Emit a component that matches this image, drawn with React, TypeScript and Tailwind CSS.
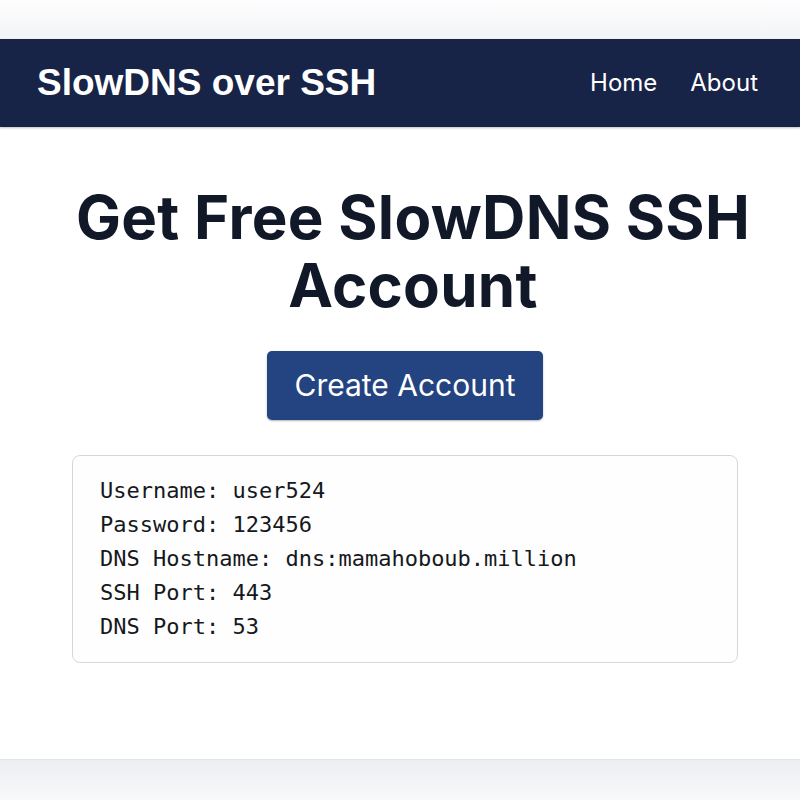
export default function App() {
  const lines = [
    'Username: user524',
    'Password: 123456',
    'DNS Hostname: dns:mamahoboub.million',
    'SSH Port: 443',
    'DNS Port: 53',
  ];

  return (
    <div className="w-[800px] h-[800px] flex flex-col bg-white overflow-hidden">
      <div className="h-[39px] bg-gradient-to-b from-[#fdfdfe] to-[#f3f4f6]" />
      <nav className="h-[88px] bg-[#172447] flex items-center justify-between pl-[37px] pr-[42px] shadow-[0_1px_2px_rgba(0,0,0,0.25)]">
        <span className="text-white font-bold text-[37px] tracking-[0px] font-['Liberation_Sans',Arial,sans-serif]">
          SlowDNS over SSH
        </span>
        <div className="flex gap-[33px] text-white text-[24px] font-['Inter',sans-serif]">
          <span>Home</span>
          <span>About</span>
        </div>
      </nav>
      <main className="flex-1 flex flex-col items-center pl-[72px] pr-[62px] pt-[56px]">
        <h1 className="pl-4 whitespace-nowrap text-center text-[#111827] font-bold text-[60px] leading-[68px] tracking-[0.3px] font-['Inter',sans-serif]">
          Get Free SlowDNS SSH
          <br />
          Account
        </h1>
        <button className="mt-[32px] h-[69px] px-[27px] rounded-[5px] bg-[#234381] text-white text-[30px] font-['Inter',sans-serif] shadow-[0_1px_2px_rgba(0,0,0,0.3)]">
          Create Account
        </button>
        <div className="mt-[35px] w-full border border-[#d4d7dc] rounded-lg bg-[#fefefe] pl-[27px] py-[18px] font-['DejaVu_Sans_Mono',monospace] text-[22px] leading-[34px] text-[#15181c]">
          {lines.map((l) => (
            <div key={l}>{l}</div>
          ))}
        </div>
      </main>
      <footer className="h-[41px] bg-gradient-to-b from-[#eceef1] to-[#f8f9fb] border-t border-[#e3e5e8]" />
    </div>
  );
}
